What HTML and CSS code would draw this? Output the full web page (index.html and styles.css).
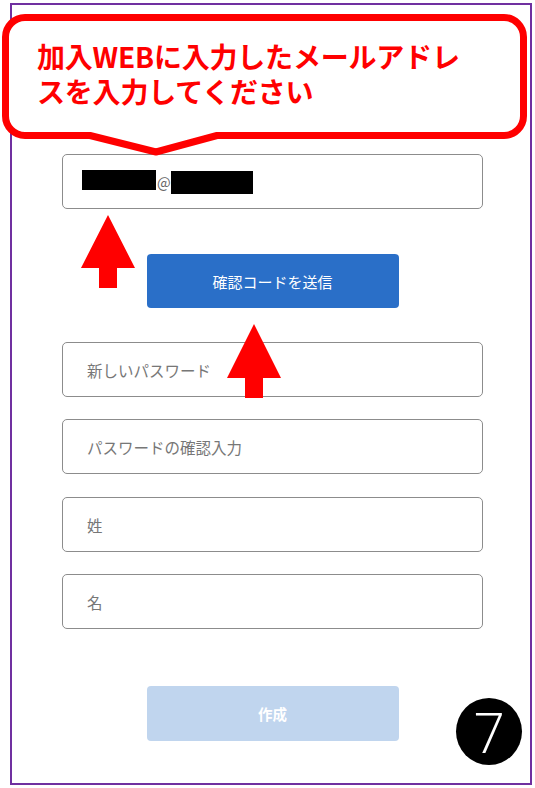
FILE: index.html
```html
<!DOCTYPE html>
<html lang="ja">

<head>
    <meta charset="UTF-8">
    <meta name="viewport" content="width=device-width, initial-scale=1.0">
    <title>アカウント作成</title>
    <link rel="stylesheet" href="styles.css">
</head>

<body>
    <div class="page">
        <div class="frame">
            <form class="signup" onsubmit="return false">
                <div class="field email">
                    <span class="mask mask-user"></span><span class="at">@</span><span class="mask mask-domain"></span>
                </div>
                <button type="button" class="btn btn-send">確認コードを送信</button>

                <input type="password" class="field" placeholder="新しいパスワード">
                <input type="password" class="field" placeholder="パスワードの確認入力">
                <input type="text" class="field" placeholder="姓">
                <input type="text" class="field" placeholder="名">

                <button type="submit" class="btn btn-create" disabled>作成</button>
            </form>
        </div>

        <!-- annotations drawn over the screen -->
        <div class="callout">
            <svg class="callout-shape" width="535" height="170" viewBox="0 0 535 170">
                <path d="M25 17.5 H504 A19.5 19.5 0 0 1 523.5 37 V116 A19.5 19.5 0 0 1 504 135.5 H217 L156 152 L90 135.5 H25 A19.5 19.5 0 0 1 5.5 116 V37 A19.5 19.5 0 0 1 25 17.5 Z" fill="#fff" stroke="#ff0000" stroke-width="7" stroke-linejoin="round" />
            </svg>
            <p class="callout-text">加入WEBに入力したメールアドレ<br>スを入力してください</p>
        </div>

        <svg class="arrows" width="535" height="420" viewBox="0 0 535 420">
            <polygon points="108,215 135,268 117,268 117,288 99,288 99,268 81,268" fill="#ff0000" />
            <polygon points="254,324 281,378 263,378 263,398 245,398 245,378 227,378" fill="#ff0000" />
        </svg>

        <div class="step">7</div>
    </div>
</body>

</html>
```

FILE: styles.css
```css
body {
    margin: 0;
    font-family: "Noto Sans CJK JP", "Noto Sans", sans-serif;
    background-color: #ffffff;
}

.page {
    position: relative;
    width: 535px;
    height: 788px;
}

.frame {
    box-sizing: border-box;
    width: 522px;
    height: 782px;
    margin: 0 0 0 10px;
    position: relative;
    top: 3px;
    border: 2px solid #7030a0;
}

.signup {
    display: flex;
    flex-direction: column;
    align-items: center;
    width: 421px;
    padding: 149px 0 0 50px;
}

.field {
    box-sizing: border-box;
    width: 421px;
    height: 55px;
    margin: 0 0 22px 0;
    padding: 0 0 0 24px;
    border: 1px solid #8c8c8c;
    border-radius: 5px;
    font-family: inherit;
    font-size: 15.5px;
    color: #333;
    background: #fff;
}

.field::placeholder {
    color: #777777;
}

.email {
    display: flex;
    align-items: center;
    padding-left: 19px;
    margin-bottom: 45px;
}

.mask {
    display: inline-block;
    background: #000;
}

.mask-user {
    width: 74px;
    height: 20px;
    margin-top: -3px;
}

.mask-domain {
    width: 82px;
    height: 23px;
    margin-top: 2px;
}

.at {
    font-size: 14.5px;
    color: #666;
    margin: 0 0 0 1px;
}

.btn {
    width: 252px;
    height: 55px;
    border: none;
    border-radius: 4px;
    color: #fff;
    font-family: inherit;
    font-size: 15px;
}

.btn-send {
    background-color: #2a6fc8;
    height: 54px;
    margin-bottom: 34px;
}

.btn-create {
    background-color: #c0d5ee;
    font-weight: bold;
    font-size: 14.5px;
    margin-top: 34px;
}

.signup .field:nth-of-type(2),
.signup .field:nth-of-type(4) {
    margin-bottom: 23px;
}

.callout {
    position: absolute;
    left: 0;
    top: 0;
    width: 535px;
    height: 170px;
}

.callout-shape {
    position: absolute;
    left: 0;
    top: 0;
}

.callout-text {
    position: absolute;
    left: 37px;
    top: 39px;
    margin: 0;
    font-size: 28px;
    font-weight: bold;
    line-height: 35px;
    color: #ff0000;
    letter-spacing: -0.2px;
}

.arrows {
    position: absolute;
    left: 0;
    top: 0;
}

.step {
    position: absolute;
    left: 456px;
    top: 698px;
    width: 66px;
    height: 67px;
    border-radius: 50%;
    background: #000;
    color: #fff;
    font-family: "Open Sans", "DejaVu Sans", sans-serif;
    font-weight: 300;
    font-size: 56px;
    line-height: 67px;
    text-align: center;
}
```
